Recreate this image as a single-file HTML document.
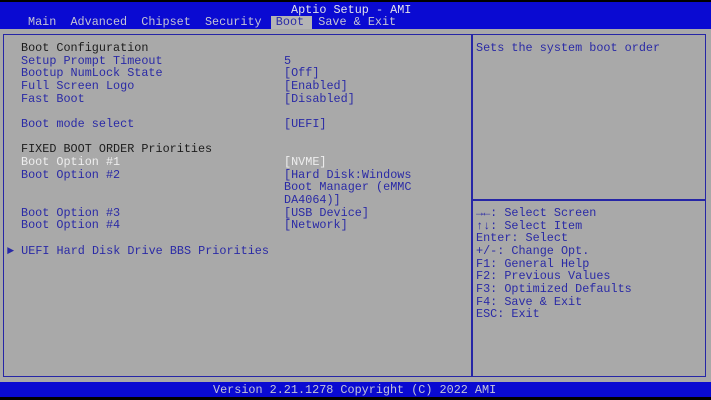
<!DOCTYPE html>
<html><head><meta charset="utf-8"><style>
*{margin:0;padding:0}
body{width:711px;height:400px;overflow:hidden;background:#a9a9a9;position:relative;font-family:"Liberation Mono","DejaVu Sans Mono",monospace;font-size:11.8px;}
.t{position:absolute;white-space:pre;line-height:12.65px;}
#top{position:absolute;left:0;top:0;width:711px;height:29px;background:#0a0ad2;border-top:2px solid #000;box-sizing:border-box}
#bot{position:absolute;left:0;top:382px;width:711px;height:15px;background:#0a0ad2}
#blk{position:absolute;left:0;top:397px;width:711px;height:3px;background:#000}
#box{position:absolute;left:3px;top:34px;width:703px;height:343px;border:1px solid #2626a6;box-sizing:border-box;border-width:1.5px}
#div{position:absolute;left:471px;top:34px;width:2px;height:343px;background:#2626a6}
#hl{position:absolute;left:473px;top:199px;width:233px;height:1.5px;background:#2626a6}
.b{color:#2a2aa6}.k{color:#1c1c1c}.w{color:#eeeeee}.m{color:#c4c4d4}
</style></head><body>
<div id="top"></div>
<div class="t m" style="left:291px;top:4px;color:#e0e0e8">Aptio Setup - AMI</div>
<div style="position:absolute;left:271px;top:16px;width:41px;height:13px;background:#b4b4b4"></div>
<div class="t m" style="left:28px;top:16px">Main  Advanced  Chipset  Security  <span style="color:#2a2aa6">Boot</span>  Save &amp; Exit</div>
<div id="box"></div><div id="div"></div><div id="hl"></div>
<div class="t" style="left:21px;top:42px"><span class="k">Boot Configuration</span>
<span class="b">Setup Prompt Timeout</span>
<span class="b">Bootup NumLock State</span>
<span class="b">Full Screen Logo</span>
<span class="b">Fast Boot</span>

<span class="b">Boot mode select</span>

<span class="k">FIXED BOOT ORDER Priorities</span>
<span class="w">Boot Option #1</span>
<span class="b">Boot Option #2</span>


<span class="b">Boot Option #3</span>
<span class="b">Boot Option #4</span>
</div>
<div class="t b" style="left:7px;top:245px">&#9658; UEFI Hard Disk Drive BBS Priorities</div>
<div class="t" style="left:284px;top:42px">
<span class="b">5</span>
<span class="b">[Off]</span>
<span class="b">[Enabled]</span>
<span class="b">[Disabled]</span>

<span class="b">[UEFI]</span>


<span class="w">[NVME]</span>
<span class="b">[Hard Disk:Windows
Boot Manager (eMMC
DA4064)]
[USB Device]
[Network]</span>
</div>
<div class="t b" style="left:476px;top:42px">Sets the system boot order</div>
<div class="t b" style="left:476px;top:207px">&#8594;&#8592;: Select Screen
&#8593;&#8595;: Select Item
Enter: Select
+/-: Change Opt.
F1: General Help
F2: Previous Values
F3: Optimized Defaults
F4: Save &amp; Exit
ESC: Exit</div>
<div id="bot"></div>
<div class="t" style="left:213px;top:384px;color:#c4c4d8">Version 2.21.1278 Copyright (C) 2022 AMI</div>
<div id="blk"></div>
</body></html>
